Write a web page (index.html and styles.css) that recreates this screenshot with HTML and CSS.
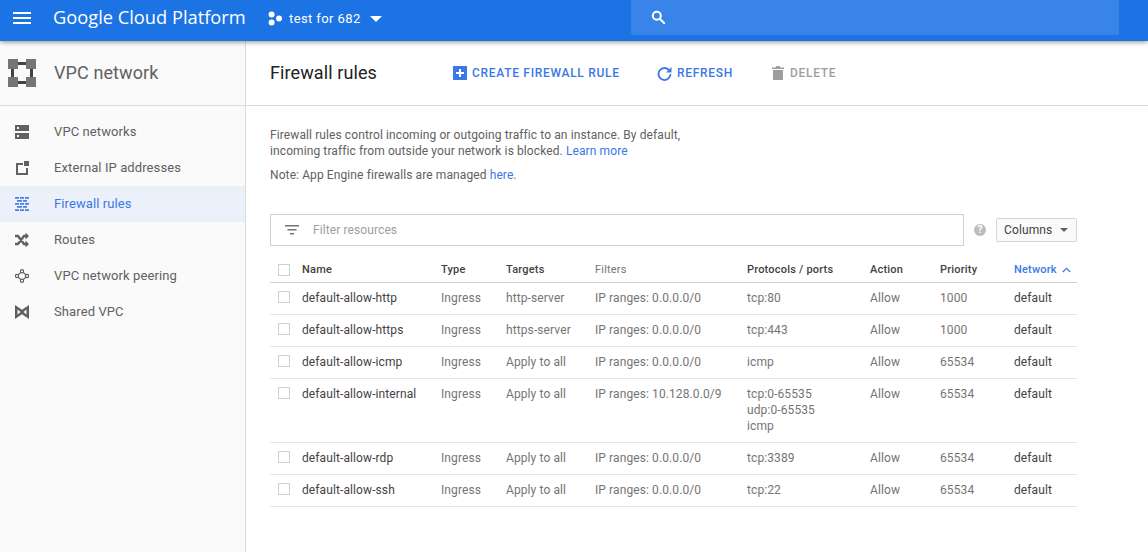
FILE: index.html
```html
<!DOCTYPE html>
<html lang="en">
<head>
    <meta charset="UTF-8">
    <title>Firewall rules - Google Cloud Platform</title>
    <link rel="stylesheet" href="styles.css">
</head>
<body>

    <header class="topbar">
        <svg class="menu-icon" width="18" height="12" viewBox="0 0 18 12"><path d="M0 0h18v2H0zM0 5h18v2H0zM0 10h18v2H0z" fill="#fff"/></svg>
        <div class="brand">Google Cloud Platform</div>
        <div class="project">
            <svg width="15" height="15" viewBox="0 0 15 15" fill="#fff"><circle cx="3.6" cy="3.4" r="3"/><circle cx="3.6" cy="11.4" r="3"/><circle cx="11" cy="7.4" r="3"/></svg>
            <span>test for 682</span>
            <i class="caret-white"></i>
        </div>
        <div class="search">
            <svg width="15" height="15" viewBox="0 0 15 15" fill="none" stroke="#fff"><circle cx="5.8" cy="5.8" r="4" stroke-width="2"/><path d="M8.800 8.800l5 5" stroke-width="2"/></svg>
        </div>
    </header>

    <div class="main">
        <aside class="sidebar">
            <div class="side-title">
                <svg width="28" height="28" viewBox="0 0 28 28" fill="#757575"><path d="M0 0h10v10H0zM18 0h10v10H18zM0 18h10v10H0zM18 18h10v10H18z"/><path d="M10 3h8v3h-8zM10 22h8v3h-8zM3 10h3v8H3zM22 10h3v8h-3z" fill="#424242"/></svg>
                <span>VPC network</span>
            </div>
            <nav class="side-nav">
                <a class="side-item">
                    <svg width="14" height="14" viewBox="0 0 14 14" fill="#616161"><path d="M0 0h14v6H0zM0 8h14v6H0z"/><path d="M2 2h2v2H2zM2 10h2v2H2z" fill="#fafafa"/></svg>
                    <span>VPC networks</span>
                </a>
                <a class="side-item">
                    <svg width="14" height="14" viewBox="0 0 14 14" fill="none" stroke="#616161" stroke-width="2"><path d="M8 3H2v10h10V7"/><path d="M9 0h5v5H9z" fill="#616161" stroke="none"/></svg>
                    <span>External IP addresses</span>
                </a>
                <a class="side-item active">
                    <svg width="14" height="14" viewBox="0 0 14 14" fill="#4a7de8"><path d="M0 0h4v1.800H0zM5 0h4v1.800H5zM10 0h4v1.800h-4zM2 3h5v1.800H2zM8 3h4v1.800H8zM0 6h4v1.800H0zM5 6h4v1.800H5zM10 6h4v1.800h-4zM2 9h5v1.800H2zM8 9h4v1.800H8zM0 12.200h4V14H0zM5 12.200h4V14H5zM10 12.200h4V14h-4z"/></svg>
                    <span>Firewall rules</span>
                </a>
                <a class="side-item">
                    <svg width="14" height="14" viewBox="0 0 14 14" fill="none" stroke="#616161" stroke-width="2.400"><path d="M0 3h3l6 8h2M0 11h3l6-8h2"/><path d="M10.500 -.5l3.500 3.500-3.500 3.500zM10.500 7.500l3.500 3.500-3.500 3.500z" fill="#616161" stroke="none"/></svg>
                    <span>Routes</span>
                </a>
                <a class="side-item">
                    <svg width="14" height="14" viewBox="0 0 14 14" fill="none" stroke="#616161" stroke-width="1.200"><circle cx="7" cy="2.200" r="1.600"/><circle cx="7" cy="11.800" r="1.600"/><circle cx="2" cy="7" r="1.600"/><circle cx="12" cy="7" r="1.600"/><path d="M3.200 5.800l2.600-2.400M8.200 3.400l2.600 2.400M3.200 8.200l2.600 2.400M8.200 10.600l2.600-2.400"/></svg>
                    <span>VPC network peering</span>
                </a>
                <a class="side-item">
                    <svg width="14" height="14" viewBox="0 0 14 14" fill="#616161"><path d="M0 0l7 4.800L14 0v14L7 9.200 0 14zM2.500 4.500v5L5.500 7zM11.500 4.500L8.500 7l3 2.500z" fill-rule="evenodd"/></svg>
                    <span>Shared VPC</span>
                </a>
            </nav>
        </aside>

        <main class="content">
            <div class="toolbar">
                <h1>Firewall rules</h1>
                <a class="action create">
                    <svg width="14" height="14" viewBox="0 0 14 14"><path d="M0 0h14v14H0z" fill="#3b78e7"/><path d="M6 3h2v3h3v2H8v3H6V8H3V6h3z" fill="#fff"/></svg>
                    CREATE FIREWALL RULE
                </a>
                <a class="action refresh">
                    <svg width="15" height="15" viewBox="0 0 15 15" fill="none"><path d="M12.300 4.400A6 6 0 1 0 13.500 8" stroke="#3b78e7" stroke-width="1.800"/><path d="M14.500 1v5.500H9z" fill="#3b78e7"/></svg>
                    REFRESH
                </a>
                <a class="action delete">
                    <svg width="12" height="14" viewBox="0 0 12 14" fill="#9e9e9e"><path d="M1 4h10v10H1zM0 1.500h3.500L4.500 0h3l1 1.500H12V3H0z"/></svg>
                    DELETE
                </a>
            </div>

            <div class="body">
                <p class="intro">Firewall rules control incoming or outgoing traffic to an instance. By default,<br>incoming traffic from outside your network is blocked. <a class="link">Learn more</a></p>
                <p class="note">Note: App Engine firewalls are managed <a class="link">here.</a></p>

                <div class="filter-row">
                    <div class="filter">
                        <svg width="14" height="10" viewBox="0 0 14 10" fill="#757575"><path d="M0 0h14v1.500H0zM2.500 4h9v1.500h-9zM5 8h4v1.500H5z"/></svg>
                        <span>Filter resources</span>
                    </div>
                    <div class="help">?</div>
                    <button class="columns">Columns <i class="caret-grey"></i></button>
                </div>

                <table class="rules">
                    <thead>
                        <tr>
                            <th class="col-check"><i class="check"></i></th>
                            <th class="col-name">Name</th>
                            <th class="col-type">Type</th>
                            <th class="col-targets">Targets</th>
                            <th class="col-filters">Filters</th>
                            <th class="col-ports">Protocols / ports</th>
                            <th class="col-action">Action</th>
                            <th class="col-priority">Priority</th>
                            <th class="col-network">Network
                                <svg class="sort-arrow" width="9" height="6" viewBox="0 0 9 6" fill="none" stroke="#3b78e7" stroke-width="1.200"><path d="M.8 5l3.700-3.700L8.200 5"/></svg>
                            </th>
                        </tr>
                    </thead>
                    <tbody>
                        <tr>
                            <td><i class="check"></i></td>
                            <td class="dark">default-allow-http</td>
                            <td>Ingress</td>
                            <td>http-server</td>
                            <td>IP ranges: 0.0.0.0/0</td>
                            <td>tcp:80</td>
                            <td>Allow</td>
                            <td>1000</td>
                            <td class="dark">default</td>
                        </tr>
                        <tr>
                            <td><i class="check"></i></td>
                            <td class="dark">default-allow-https</td>
                            <td>Ingress</td>
                            <td>https-server</td>
                            <td>IP ranges: 0.0.0.0/0</td>
                            <td>tcp:443</td>
                            <td>Allow</td>
                            <td>1000</td>
                            <td class="dark">default</td>
                        </tr>
                        <tr>
                            <td><i class="check"></i></td>
                            <td class="dark">default-allow-icmp</td>
                            <td>Ingress</td>
                            <td>Apply to all</td>
                            <td>IP ranges: 0.0.0.0/0</td>
                            <td>icmp</td>
                            <td>Allow</td>
                            <td>65534</td>
                            <td class="dark">default</td>
                        </tr>
                        <tr>
                            <td><i class="check"></i></td>
                            <td class="dark">default-allow-internal</td>
                            <td>Ingress</td>
                            <td>Apply to all</td>
                            <td>IP ranges: 10.128.0.0/9</td>
                            <td>tcp:0-65535<br>udp:0-65535<br>icmp</td>
                            <td>Allow</td>
                            <td>65534</td>
                            <td class="dark">default</td>
                        </tr>
                        <tr>
                            <td><i class="check"></i></td>
                            <td class="dark">default-allow-rdp</td>
                            <td>Ingress</td>
                            <td>Apply to all</td>
                            <td>IP ranges: 0.0.0.0/0</td>
                            <td>tcp:3389</td>
                            <td>Allow</td>
                            <td>65534</td>
                            <td class="dark">default</td>
                        </tr>
                        <tr>
                            <td><i class="check"></i></td>
                            <td class="dark">default-allow-ssh</td>
                            <td>Ingress</td>
                            <td>Apply to all</td>
                            <td>IP ranges: 0.0.0.0/0</td>
                            <td>tcp:22</td>
                            <td>Allow</td>
                            <td>65534</td>
                            <td class="dark">default</td>
                        </tr>
                    </tbody>
                </table>
            </div>
        </main>
    </div>

</body>
</html>
```
FILE: styles.css
```css
* {
    box-sizing: border-box;
}
html, body {
    height: 100%;
}
body {
    margin: 0;
    font-family: Roboto, Arial, sans-serif;
    font-size: 12px;
    letter-spacing: 0.1px;
    color: #757575;
    background: #fff;
    overflow: hidden;
    display: flex;
    flex-direction: column;
}

/* top bar */
.topbar {
    flex: none;
    height: 41px;
    background: #1c73e3;
    display: flex;
    align-items: center;
    position: relative;
    z-index: 2;
    box-shadow: 0 1px 5px rgba(0, 0, 0, 0.45);
    padding-left: 13px;
}
.menu-icon {
    flex: none;
    margin-top: -6px;
}
.brand {
    margin-left: 22px;
    margin-top: -9px;
    width: 215px;
    color: #fff;
    font-family: "Open Sans", Roboto, sans-serif;
    font-size: 18.25px;
    letter-spacing: 0;
    white-space: nowrap;
}
.project {
    display: flex;
    align-items: center;
    color: #fff;
    font-size: 13px;
    letter-spacing: 0.4px;
    margin-top: -4px;
    width: 363px;
}
.project span {
    margin-left: 6px;
}
.caret-white {
    width: 0;
    height: 0;
    margin-left: 9px;
    border-left: 6px solid transparent;
    border-right: 6px solid transparent;
    border-top: 6px solid #fff;
}
.search {
    width: 488px;
    height: 35px;
    background: #3884e8;
    border-radius: 0 0 2px 2px;
    align-self: flex-start;
    display: flex;
    align-items: center;
    padding-left: 20px;
}

.main {
    flex: 1;
    display: flex;
    min-height: 0;
}

/* sidebar */
.sidebar {
    flex: none;
    width: 246px;
    background: #fafafa;
    border-right: 1px solid #dadada;
}
.side-title {
    height: 65px;
    display: flex;
    align-items: center;
    gap: 18px;
    padding-left: 8px;
    border-bottom: 1px solid #dadada;
    font-size: 18px;
    color: #616161;
}
.side-title span {
    padding-bottom: 2px;
}
.side-nav {
    padding-top: 8px;
}
.side-item {
    height: 36px;
    display: flex;
    align-items: center;
    gap: 25px;
    padding-left: 15px;
    font-size: 13px;
    letter-spacing: 0.1px;
    color: #616161;
}
.side-item span {
    padding-bottom: 2px;
}
.side-item.active {
    background: #ebf0fa;
    color: #3b78e7;
}

/* toolbar */
.content {
    flex: 1;
    min-width: 0;
}
.toolbar {
    height: 65px;
    display: flex;
    align-items: center;
    padding-left: 24px;
    border-bottom: 1px solid #dadada;
}
.toolbar h1 {
    margin: 0;
    padding-bottom: 2px;
    width: 183px;
    font-size: 18px;
    font-weight: 400;
    color: #212121;
}
.action {
    display: flex;
    align-items: center;
    gap: 5px;
    font-size: 12px;
    font-weight: 500;
    letter-spacing: 0.7px;
    color: #3b78e7;
}
.create {
    width: 204px;
}
.refresh {
    width: 115px;
}
.delete {
    color: #9e9e9e;
    gap: 6px;
}

/* page body */
.body {
    padding: 0 71px 0 24px;
}
.intro {
    margin: 21px 0 0;
    line-height: 16px;
    color: #616161;
}
.note {
    margin: 8px 0 0;
    line-height: 16px;
    color: #616161;
}
.link {
    color: #3b78e7;
}
.filter-row {
    margin-top: 31px;
    display: flex;
    align-items: center;
}
.filter {
    width: 695px;
    height: 32px;
    border: 1px solid #d0d0d0;
    display: flex;
    align-items: center;
    gap: 14px;
    padding-left: 14px;
    color: #9e9e9e;
}
.help {
    width: 12px;
    height: 12px;
    margin-left: 10px;
    border-radius: 50%;
    background: #bdbdbd;
    color: #fff;
    font-size: 10px;
    font-weight: 700;
    line-height: 12px;
    text-align: center;
}
.columns {
    margin-left: 10px;
    width: 81px;
    height: 24px;
    padding: 0 0 0 7px;
    border: 1px solid #d6d6d6;
    border-radius: 2px;
    background: #fafafa;
    font: 12px Roboto, Arial, sans-serif;
    letter-spacing: 0.1px;
    color: #424242;
    display: flex;
    align-items: center;
}
.caret-grey {
    width: 0;
    height: 0;
    margin-left: 8px;
    border-left: 4px solid transparent;
    border-right: 4px solid transparent;
    border-top: 4px solid #616161;
}

/* table */
.rules {
    width: 807px;
    margin-top: 8px;
    border-collapse: collapse;
    table-layout: fixed;
}
.rules th {
    height: 28px;
    padding: 4px 0 0;
    text-align: left;
    font-size: 11px;
    font-weight: 500;
    letter-spacing: 0.2px;
    color: #424242;
    border-bottom: 1px solid #d0d0d0;
}
.rules th.col-filters {
    font-weight: 400;
    color: #757575;
}
.rules th.col-network {
    color: #3b78e7;
    white-space: nowrap;
}
.rules td {
    height: 32px;
    padding: 7px 0 8px;
    line-height: 16px;
    vertical-align: top;
    white-space: nowrap;
    border-bottom: 1px solid #e4e4e4;
}
.rules td .check {
    margin-top: 1px;
}
.rules .dark {
    color: #424242;
}
.sort-arrow {
    margin-left: 2px;
}
.col-check { width: 32px; }
.col-name { width: 139px; }
.col-type { width: 65px; }
.col-targets { width: 89px; }
.col-filters { width: 152px; }
.col-ports { width: 123px; }
.col-action { width: 70px; }
.col-priority { width: 74px; }
.col-network { width: 63px; }
.check {
    display: block;
    width: 12px;
    height: 12px;
    margin-left: 8px;
    border: 1px solid #d0d0d0;
    background: #fff;
}
```
